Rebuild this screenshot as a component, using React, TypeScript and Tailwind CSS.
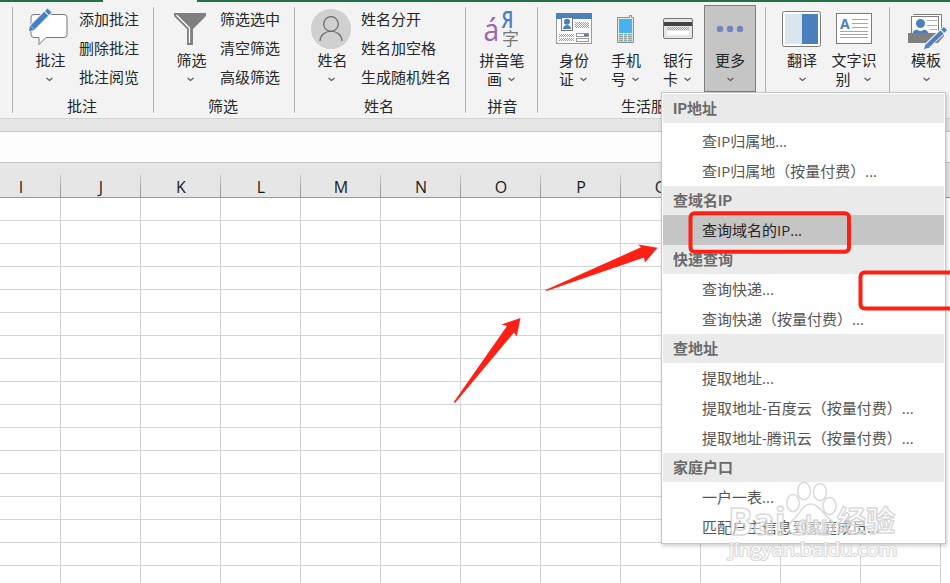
import React from 'react';

const FONT = "font-['Open_Sans','Noto_Sans_CJK_SC',sans-serif]";

const Chevron = () => (
  <svg width="7" height="5" viewBox="0 0 7 5" className="shrink-0">
    <path d="M0.5 1 L3.5 3.5 L6.5 1" fill="none" stroke="#555" strokeWidth="1.100" />
  </svg>
);

const Separator = () => <div className="mt-[5px] h-[106px] w-px shrink-0 bg-[#b1b1b1]" />;

interface RibbonButtonProps {
  icon: React.ReactNode;
  label: string;
  second?: string;
  gap?: string;
  shift?: string;
  active?: boolean;
}

const RibbonButton = ({ icon, label, second, gap = 'gap-[6px]', shift = '', active }: RibbonButtonProps) => (
  <div
    className={`mt-[3px] flex h-[87px] w-[52px] shrink-0 flex-col items-center ${
      active ? 'bg-[#c5c5c5] ring-1 ring-inset ring-[#7c7c7c]' : ''
    }`}
  >
    <svg width="52" height="46" viewBox="0 0 52 46" className="shrink-0">
      {icon}
    </svg>
    <span className={`h-[19px] whitespace-nowrap leading-[19px] ${shift}`}>{label}</span>
    <span className={`flex h-[19px] items-center leading-[19px] ${second ? `${gap} pr-[2px]` : ''}`}>
      {second}
      <Chevron />
    </span>
  </div>
);

const SmallList = ({ items }: { items: string[] }) => (
  <div className="mt-[3px] flex flex-col">
    {items.map((item) => (
      <span key={item} className="h-[29px] leading-[29px]">
        {item}
      </span>
    ))}
  </div>
);

interface GroupProps {
  width: string;
  title: string;
  children: React.ReactNode;
}

const Group = ({ width, title, children }: GroupProps) => (
  <div className={`flex h-[116px] shrink-0 flex-col ${width}`}>
    <div className="flex h-[94px] justify-start">{children}</div>
    <span className="h-[20px] text-center leading-[20px]">{title}</span>
  </div>
);

const CommentIcon = (
  <>
    <path
      d="M11 9.5 H41 a3 3 0 0 1 3 3 V29.500 a3 3 0 0 1 -3 3 H23 L16 39.500 V32.500 H11 a3 3 0 0 1 -3 -3 V12.500 a3 3 0 0 1 3 -3 Z"
      fill="#fff"
      stroke="#777"
    />
    <path d="M7 25 L27 5" stroke="#f3f3f3" strokeWidth="8" />
    <path d="M9.500 22.500 L23.200 8.800" stroke="#4a80bd" strokeWidth="5.500" />
    <path d="M24 8 L26.500 5.500" stroke="#4a80bd" strokeWidth="5.500" />
    <path d="M7 20.500 L11.500 25 L6 26 Z" fill="#4a80bd" />
  </>
);

const FunnelIcon = (
  <>
    <path d="M10 8 H42 V11 L29 24 V40 H23 V24 L10 11 Z" fill="#7f7f7f" />
    <path d="M12.500 10 L25.500 23 V38" fill="none" stroke="#fff" strokeWidth="1.300" />
  </>
);

const PersonIcon = (
  <>
    <circle cx="26" cy="24" r="20" fill="#d0d0d0" />
    <circle cx="26" cy="19" r="7.300" fill="none" stroke="#666" strokeWidth="1.200" />
    <path d="M15 36 C15.500 23, 36.500 23, 37 36" fill="none" stroke="#666" strokeWidth="1.200" />
  </>
);

const PinyinIcon = (
  <>
    <text transform="translate(7.500 36) scale(0.88 0.95)" fontSize="32" fontWeight="500" fill="#9b63b8" className="font-['Open_Sans']">
      á
    </text>
    <text transform="translate(25.500 23) scale(0.82 1)" fontSize="22.500" fontWeight="600" fill="#4a80bd" className="font-['Open_Sans']">
      Я
    </text>
    <text x="26" y="39.500" fontSize="17" fill="#777">
      字
    </text>
  </>
);

const IdCardIcon = (
  <>
    <defs>
      <pattern id="dots" width="2" height="2" patternUnits="userSpaceOnUse">
        <rect width="1" height="1" fill="#a0a0a0" />
        <rect x="1" y="1" width="1" height="1" fill="#a0a0a0" />
      </pattern>
    </defs>
    <rect x="8.500" y="8.500" width="35" height="30" fill="#fff" stroke="#999" />
    <rect x="8" y="8" width="36" height="6" fill="#4a80bd" />
    <rect x="13.500" y="12.500" width="11" height="13" fill="#fff" stroke="#777" />
    <circle cx="19" cy="16.800" r="3" fill="#4a80bd" />
    <path d="M15 24 C15 18.500, 23 18.500, 23 24 Z" fill="#4a80bd" />
    <rect x="27" y="17" width="14" height="6" fill="url(#dots)" />
    <rect x="11" y="29" width="15" height="3" fill="url(#dots)" />
    <rect x="11" y="33" width="15" height="3" fill="url(#dots)" />
    <rect x="28.500" y="28.500" width="12" height="3" fill="#fff" stroke="#999" />
    <rect x="36" y="29" width="4" height="2" fill="#4a80bd" />
    <rect x="28.500" y="33.500" width="12" height="3" fill="#fff" stroke="#999" />
  </>
);

const PhoneIcon = (
  <>
    <path d="M17.500 12.500 H29.500 V10.500 H31.500 V12.500 H33.500 V37.500 H17.500 Z" fill="#dfe6e6" stroke="#829494" />
    <rect x="19" y="14" width="13" height="14" fill="#49b1ee" />
    {[29, 31, 33, 35].map((y) => (
      <g key={y} fill="#93a3a3">
        <rect x="19" y={y} width="4" height="1.400" />
        <rect x="24" y={y} width="3" height="1.400" />
        <rect x="28" y={y} width="4" height="1.400" />
      </g>
    ))}
  </>
);

const BankCardIcon = (
  <>
    <rect x="11.500" y="13.500" width="29" height="20" rx="1.500" fill="#e6e6e6" stroke="#777" />
    <rect x="12" y="17" width="28" height="4" fill="#444" />
    <rect x="15" y="22" width="22" height="3" fill="url(#dots)" />
    <rect x="15" y="26" width="22" height="4" fill="#fff" />
  </>
);

const MoreIcon = (
  <g fill="#7384c4">
    <circle cx="16" cy="24" r="3.200" />
    <circle cx="26" cy="24" r="3.200" />
    <circle cx="36" cy="24" r="3.200" />
  </g>
);

const TranslateIcon = (
  <>
    <rect x="6.500" y="6.500" width="38" height="35" rx="2" fill="#fff" stroke="#7c7c7c" />
    <rect x="9" y="9" width="17" height="30" fill="#dbe5f0" />
    <rect x="26" y="9" width="16" height="30" fill="#4a80bd" />
  </>
);

const OcrIcon = (
  <>
    <rect x="8.500" y="8.500" width="35" height="30" fill="#fff" stroke="#7c7c7c" />
    <text x="12" y="24" fontSize="14" fontWeight="700" fill="#4a80bd" className="font-['Open_Sans']">
      A
    </text>
    <path d="M24 14.500 H40 M24 18.500 H40 M24 22.500 H40 M12 26.500 H40 M12 29.500 H40 M12 32.500 H40" stroke="#a6a6a6" />
  </>
);

const TemplateIcon = (
  <>
    <path d="M13.500 9.500 H41.500 V28" fill="#fff" stroke="#7c7c7c" />
    <rect x="11.500" y="11.500" width="27" height="18" fill="#fff" stroke="#7c7c7c" />
    <circle cx="20.500" cy="18.500" r="4.500" fill="#4a80bd" />
    <path d="M12.500 29 C13 24, 18 24, 19 26 H22 C23 24, 28 24, 28.500 29 Z" fill="#4a80bd" />
    <path d="M27 15.500 H37 M27 20.500 H37 M30 24.500 H37" stroke="#b0b0b0" />
    <path d="M8 28 H44 V31 L38 38 H8 Z" fill="#7f7f7f" />
    <path d="M25 43 L46 23" stroke="#f3f3f3" strokeWidth="6.500" />
    <path d="M28 40.500 L42 27" stroke="#4a80bd" strokeWidth="4.500" />
    <path d="M42.800 26.200 L45.500 23.500" stroke="#4a80bd" strokeWidth="4.500" />
    <path d="M26 38.500 L30 42.500 L24 44 Z" fill="#4a80bd" />
  </>
);

const columns = ['I', 'J', 'K', 'L', 'M', 'N', 'O', 'P', 'Q', 'R', 'S', 'T'];
const rows = Array.from({ length: 17 }, (_, i) => i);

const Sheet = () => (
  <div className="flex flex-col">
    <div className="flex h-[35px] w-[1000px] shrink-0 items-end border-b border-[#999] bg-[#e6e6e6] text-[16px] text-[#1b1b1b]">
      {columns.map((name, i) => (
        <div key={name} className={`flex h-[23px] shrink-0 ${i === 0 ? 'w-[61px]' : 'w-20'}`}>
          <span className={`flex-1 text-center leading-[26px] ${i === 0 ? 'pr-[18px]' : 'pl-px'}`}>{name}</span>
          <div className="w-px bg-linear-to-b from-[#d0d0d0] to-[#8c8c8c]" />
        </div>
      ))}
    </div>
    {rows.map((row) => (
      <div key={row} className="flex h-[23px] w-[1000px] shrink-0">
        {columns.map((name, i) => (
          <div key={name} className={`shrink-0 border-r border-b border-[#d4d4d4] ${i === 0 ? 'w-[61px]' : 'w-20'}`} />
        ))}
      </div>
    ))}
  </div>
);

const sections = [
  { title: 'IP地址', items: ['查IP归属地...', '查IP归属地（按量付费）...'] },
  { title: '查域名IP', items: ['查询域名的IP...'] },
  { title: '快递查询', items: ['查询快递...', '查询快递（按量付费）...'] },
  { title: '查地址', items: ['提取地址...', '提取地址-百度云（按量付费）...', '提取地址-腾讯云（按量付费）...'] },
  { title: '家庭户口', items: ['一户一表...', '匹配户主信息到家庭成员...'] },
];

const Menu = () => (
  <div className="absolute left-[661px] top-[92px] w-[285px] border border-[#c6c6c6] bg-white p-px shadow-[1px_2px_4px_rgba(0,0,0,0.2)]">
    {sections.map((section, i) => (
      <div key={section.title}>
        <div className="h-[29px] bg-[#eaeaea] pl-[10px] font-['Roboto','Noto_Sans_CJK_SC',sans-serif] font-bold leading-[31px] text-[#6a6a6a]">
          {section.title}
        </div>
        <div className={i === 0 ? 'pt-[3px]' : ''}>
          {section.items.map((item) => (
            <div
              key={item}
              className={`h-[30px] whitespace-nowrap pl-[39px] leading-[30px] ${
                item === '查询域名的IP...' ? 'bg-[#c5c5c5] text-[#262626]' : 'text-[#555]'
              }`}
            >
              {item}
            </div>
          ))}
        </div>
      </div>
    ))}
  </div>
);

const Watermark = () => (
  <svg className="absolute left-[720px] top-[475px]" width="190" height="95" viewBox="0 0 190 95">
    <g fill="#fff" fillOpacity="0.45" stroke="#d2d2d2" strokeWidth="1.500" strokeOpacity="0.85" strokeLinejoin="round">
      <ellipse cx="84" cy="16" rx="6.300" ry="8.700" />
      <ellipse cx="100" cy="17" rx="6.500" ry="8.500" />
      <ellipse cx="73" cy="28" rx="6.300" ry="8.500" />
      <ellipse cx="109.500" cy="31" rx="6.500" ry="8.500" />
      <path d="M91 29 C99 29, 103 39, 110 44 C118 50, 114 61, 104 60 C96 59, 87 59, 79 60 C69 61, 66 51, 73 45 C80 39, 83 29, 91 29 Z" />
      <text x="8" y="60" fontSize="38" fontWeight="700" textLength="58" lengthAdjust="spacingAndGlyphs">
        Bai
      </text>
      <text x="77" y="58" fontSize="24" fontWeight="700">
        du
      </text>
      <text x="117" y="57" fontSize="29" fontWeight="700">
        经验
      </text>
      <text x="9" y="81" fontSize="18" strokeWidth="2.200" fillOpacity="0.9" textLength="168" lengthAdjust="spacingAndGlyphs" className="[paint-order:stroke]">
        jingyan.baidu.com
      </text>
    </g>
  </svg>
);

const Annotations = () => (
  <svg className="absolute left-0 top-0" width="950" height="583" viewBox="0 0 950 583">
    <g fill="none" stroke="#ff2015" strokeWidth="4">
      <rect x="690.500" y="213.300" width="158.500" height="38.500" rx="4" />
      <rect x="860.500" y="272.500" width="110" height="36" rx="4" />
    </g>
    <g fill="#ff2015">
      <path d="M545.500 290 L641 247.300 L638 244.500 L657.500 247.800 L645 262.500 L644 257.500 L546.500 291 Z" />
      <path d="M453.800 402 L507 326 L501.500 324.500 L520.500 318 L516.700 336.500 L514 332.500 L455 403 Z" />
    </g>
  </svg>
);

export default function App() {
  return (
    <div className={`relative flex h-[583px] w-[950px] flex-col overflow-hidden bg-white text-[15px] text-[#262626] ${FONT}`}>
      <div className="flex h-[2px] shrink-0 justify-between bg-[#f3f3f3]">
        <div className="w-[103px] bg-[#217346]" />
        <div className="w-[753px] bg-[#217346]" />
      </div>

      <div className="flex h-[117px] shrink-0 overflow-hidden border-b border-[#d2d2d2] bg-[#f3f3f3] pl-3">
        <Separator />
        <Group width="w-[140px] pl-[10px] pr-[12px]" title="批注">
          <RibbonButton icon={CommentIcon} label="批注" shift="pl-[3px]" />
          <div className="w-1" />
          <SmallList items={['添加批注', '删除批注', '批注阅览']} />
        </Group>
        <Separator />
        <Group width="w-[140px] pl-[10px] pr-[12px]" title="筛选">
          <RibbonButton icon={FunnelIcon} label="筛选" shift="pl-[3px]" />
          <div className="w-1" />
          <SmallList items={['筛选选中', '清空筛选', '高级筛选']} />
        </Group>
        <Separator />
        <Group width="w-[170px] pl-[10px] pr-[12px]" title="姓名">
          <RibbonButton icon={PersonIcon} label="姓名" shift="pl-[3px]" />
          <div className="w-1" />
          <SmallList items={['姓名分开', '姓名加空格', '生成随机姓名']} />
        </Group>
        <Separator />
        <Group width="w-[71px] pl-[10px] pr-[8px]" title="拼音">
          <RibbonButton icon={PinyinIcon} label="拼音笔" second="画" />
        </Group>
        <Separator />
        <Group width="w-[227px] pl-[10px] pr-[11px]" title="生活服务">
          <RibbonButton icon={IdCardIcon} label="身份" second="证" />
          <RibbonButton icon={PhoneIcon} label="手机" second="号" />
          <RibbonButton icon={BankCardIcon} label="银行" second="卡" />
          <RibbonButton icon={MoreIcon} label="更多" active />
        </Group>
        <Separator />
        <Group width="w-[123px] pl-[10px]" title="">
          <RibbonButton icon={TranslateIcon} label="翻译" />
          <RibbonButton icon={OcrIcon} label="文字识" second="别" gap="gap-[13px]" />
        </Group>
        <Separator />
        <Group width="w-[72px] pl-[10px]" title="">
          <RibbonButton icon={TemplateIcon} label="模板" />
        </Group>
      </div>

      <div className="h-[13px] shrink-0 border-b border-[#c6c6c6] bg-[#e6e6e6]" />
      <div className="h-[31px] shrink-0 border-b border-[#c6c6c6] bg-[#fdfdfd]" />
      <Sheet />

      <Menu />
      <Watermark />
      <Annotations />
    </div>
  );
}
